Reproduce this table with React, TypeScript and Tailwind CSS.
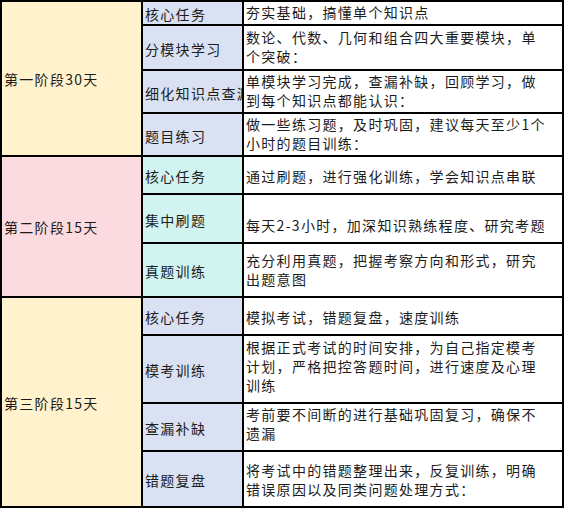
import React from 'react'

type Item = { title: string; lines: string[] }
type Phase = { name: string; phaseBg: string; itemBg: string; span: string; items: Item[] }

const phases: Phase[] = [
  {
    name: '第一阶段30天',
    phaseBg: 'bg-[#fff2cc]',
    itemBg: 'bg-[#d9e1f3]',
    span: 'row-span-4',
    items: [
      { title: '核心任务', lines: ['夯实基础，搞懂单个知识点'] },
      { title: '分模块学习', lines: ['数论、代数、几何和组合四大重要模块，单', '个突破：'] },
      { title: '细化知识点查漏', lines: ['单模块学习完成，查漏补缺，回顾学习，做', '到每个知识点都能认识：'] },
      { title: '题目练习', lines: ['做一些练习题，及时巩固，建议每天至少1个', '小时的题目训练：'] },
    ],
  },
  {
    name: '第二阶段15天',
    phaseBg: 'bg-[#fbdbdf]',
    itemBg: 'bg-[#d2f4f1]',
    span: 'row-span-3',
    items: [
      { title: '核心任务', lines: ['通过刷题，进行强化训练，学会知识点串联'] },
      { title: '集中刷题', lines: ['每天2-3小时，加深知识熟练程度、研究考题'] },
      { title: '真题训练', lines: ['充分利用真题，把握考察方向和形式，研究', '出题意图'] },
    ],
  },
  {
    name: '第三阶段15天',
    phaseBg: 'bg-[#fff2cc]',
    itemBg: 'bg-[#d9e1f3]',
    span: 'row-span-4',
    items: [
      { title: '核心任务', lines: ['模拟考试，错题复盘，速度训练'] },
      { title: '模考训练', lines: ['根据正式考试的时间安排，为自己指定模考', '计划，严格把控答题时间，进行速度及心理', '训练'] },
      { title: '查漏补缺', lines: ['考前要不间断的进行基础巩固复习，确保不', '遗漏'] },
      { title: '错题复盘', lines: ['将考试中的错题整理出来，反复训练，明确', '错误原因以及同类问题处理方式：'] },
    ],
  },
]

export default function App() {
  return (
    <div
      className="w-[564px] h-[508px] bg-white text-[14px] leading-[19px] tracking-[1.3px] text-[#1c1c1c]"
      style={{ fontFamily: '"Noto Sans CJK SC", "Noto Sans", sans-serif' }}
    >
      <div className="grid grid-cols-[139px_99px_318px] grid-rows-[22px_43px_41px_41px_36px_47px_52px_36px_66px_46px_54px] gap-[2px] p-[2px] bg-black">
        {phases.map((phase, p) => (
          <React.Fragment key={phase.name}>
            <div className={`${phase.span} ${phase.phaseBg} flex items-center px-[2px] pt-[2px] whitespace-nowrap`}>
              {phase.name}
            </div>
            {phase.items.map((item, i) => (
              <React.Fragment key={item.title + i}>
                <div
                  className={`${phase.itemBg} flex items-center px-[2px] pt-[3px] whitespace-nowrap overflow-hidden`}
                  style={{ gridColumn: 2 }}
                >
                  {item.title}
                </div>
                <div
                  className={
                    p === 0
                      ? 'bg-white flex flex-col justify-center px-[2px] pb-[2px] whitespace-nowrap overflow-hidden'
                      : 'bg-white flex flex-col justify-end px-[2px] pb-[7px] whitespace-nowrap overflow-hidden'
                  }
                  style={{ gridColumn: 3 }}
                >
                  {item.lines.map((line) => (
                    <span key={line} className="block">
                      {line}
                    </span>
                  ))}
                </div>
              </React.Fragment>
            ))}
          </React.Fragment>
        ))}
      </div>
    </div>
  )
}
